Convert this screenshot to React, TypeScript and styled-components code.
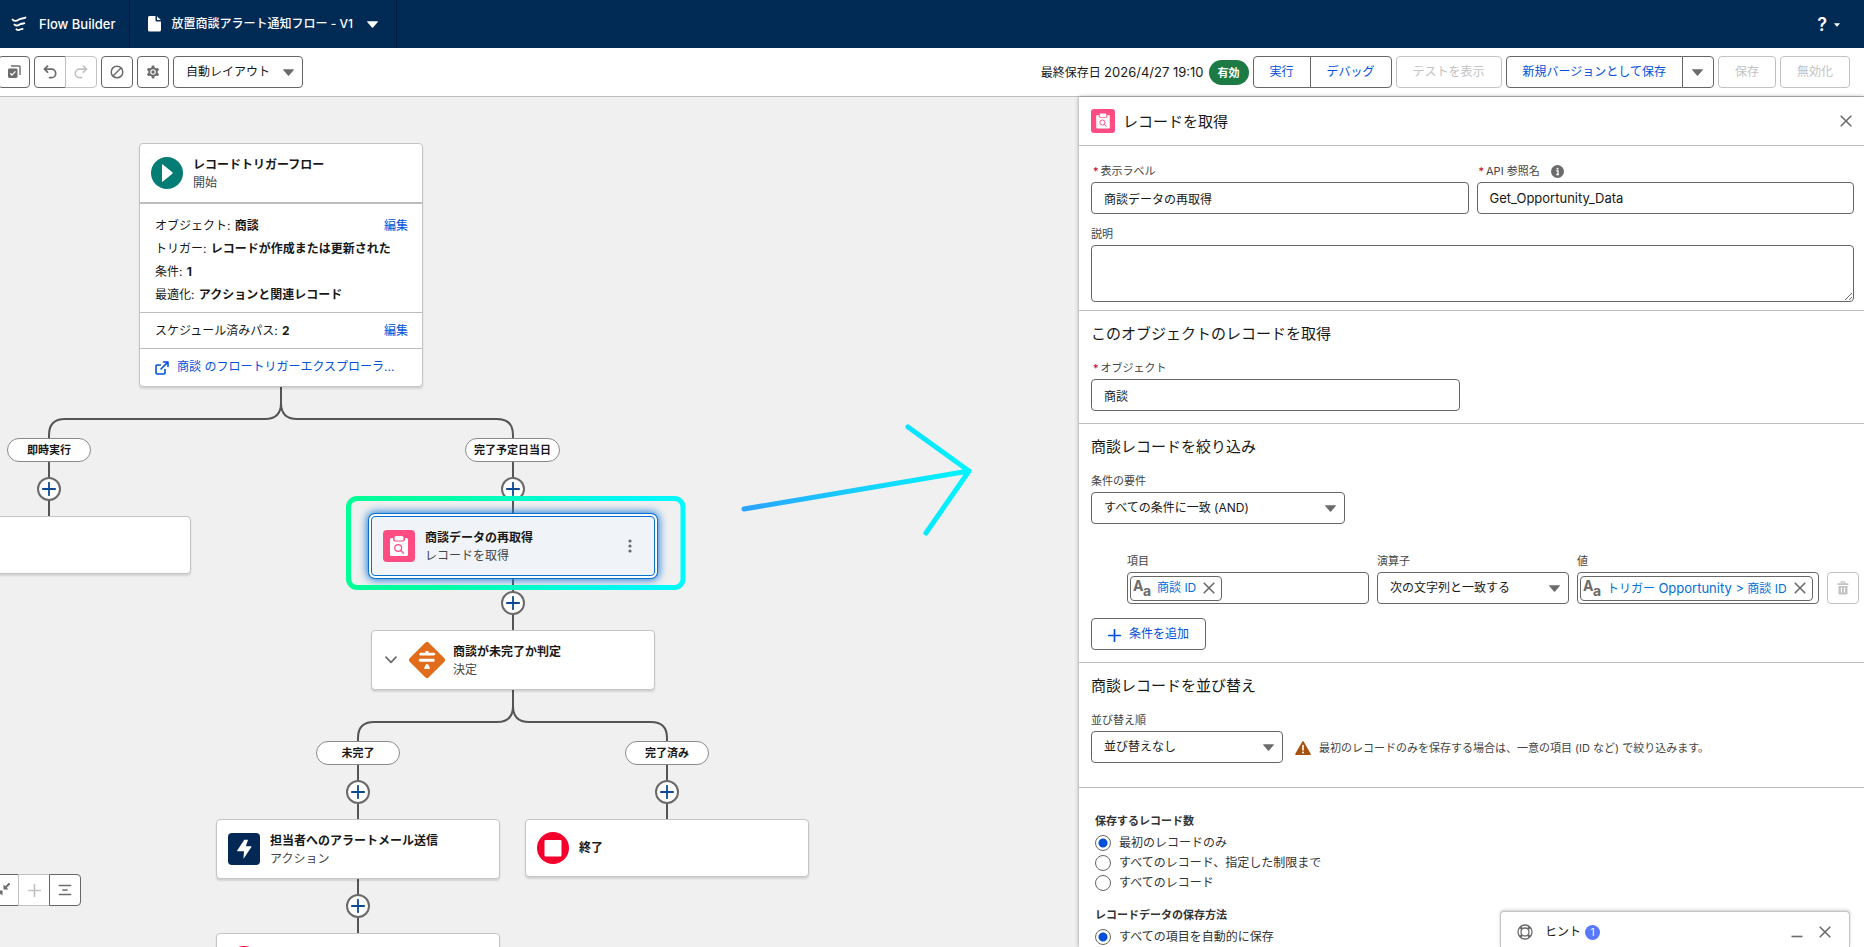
import React from "react";
import styled, { createGlobalStyle, css } from "styled-components";

const sans = `Inter, "Noto Sans CJK JP", sans-serif`;
const c = {
  navy: "#012a55",
  ink: "#181818",
  soft: "#444444",
  icon: "#6b6b6b",
  line: "#666666",
  rule: "#bdbdbd",
  faint: "#c2c2c2",
  brand: "#0250d9",
  link: "#0070d8",
  wire: "#555555",
  pink: "#ff4d84",
};

const Global = createGlobalStyle`
  *, *::before, *::after { box-sizing: border-box; }
  body { margin: 0; font-family: ${sans}; font-size: 12px; line-height: 16px; color: ${c.ink}; background: #fff; }
  button, input, select, textarea { font: inherit; color: inherit; margin: 0; }
  button { cursor: pointer; }
  a { color: ${c.brand}; text-decoration: none; }
  h1, h2, p { margin: 0; font: inherit; }
`;

/* ---------- shell ---------- */
const Shell = styled.div`
  display: flex;
  flex-direction: column;
  height: 100vh;
  overflow: hidden;
`;
const NavBar = styled.header`
  display: flex;
  flex: 0 0 48px;
  align-items: stretch;
  background: ${c.navy};
  color: #fff;
  font-weight: 500;
`;
const NavCell = styled.div<{ $pad: string }>`
  display: flex;
  align-items: center;
  padding: ${(p) => p.$pad};
  border-right: 1px solid #001b3a;
  white-space: nowrap;
`;
const NavTitle = styled.h1`
  margin-left: 12px;
  padding-bottom: 1px;
  font-size: 13px;
`;
const FlowName = styled.span`
  margin: 0 14px 0 10px;
`;
const Latin = styled.span`
  font-size: 13px;
`;
const BareButton = styled.button`
  display: inline-flex;
  align-items: center;
  justify-content: center;
  padding: 0;
  border: 0;
  background: none;
  color: inherit;
`;
const HelpButton = styled(BareButton)`
  gap: 7px;
  margin-left: auto;
  padding: 2px 24px 0 0;
  font-size: 18px;
  font-weight: 600;
`;
const Toolbar = styled.div`
  display: flex;
  flex: 0 0 49px;
  align-items: center;
  gap: 4px;
  margin-left: -2px;
  padding-right: 14px;
  border-bottom: 1px solid ${c.rule};
  background: #fff;
`;
const Spacer = styled.div`
  flex: 1;
`;
const Group = styled.div`
  display: flex;
  & > button { border-radius: 0; }
  & > button + button { margin-left: -1px; }
  & > button:first-child { border-radius: 4px 0 0 4px; }
  & > button:last-child { border-radius: 0 4px 4px 0; }
`;
const Button = styled.button`
  height: 32px;
  padding: 0 16px;
  border: 1px solid ${c.line};
  border-radius: 4px;
  background: #fff;
  color: ${c.brand};
  white-space: nowrap;
  &:disabled { border-color: ${c.faint}; color: ${c.faint}; }
`;
const IconButton = styled.button`
  display: inline-flex;
  flex: 0 0 32px;
  align-items: center;
  justify-content: center;
  width: 32px;
  height: 32px;
  padding: 0;
  border: 1px solid ${c.line};
  border-radius: 4px;
  background: #fff;
  color: ${c.icon};
  &:disabled { border-color: ${c.faint}; color: ${c.faint}; }
`;
const Saved = styled.span`
  white-space: nowrap;
  time { font-size: 13px; }
`;
const Status = styled.span`
  margin-left: 1px;
  padding: 5px 9px 4px;
  border-radius: 13px;
  background: #1c7a45;
  color: #fff;
  font-size: 11px;
  font-weight: 700;
`;
const Body = styled.div`
  display: flex;
  flex: 1;
  min-height: 0;
`;

/* ---------- canvas ---------- */
const Canvas = styled.main`
  position: relative;
  flex: 1;
  min-width: 0;
  overflow: hidden;
  background: #f0f0f0;
`;
const Wires = styled.svg`
  position: absolute;
  top: 0;
  left: 0;
  width: 1000px;
  height: 850px;
  pointer-events: none;
`;
type Spot = { $x: number; $y: number };
const spot = css<Spot>`
  position: absolute;
  left: ${(p) => p.$x}px;
  top: ${(p) => p.$y}px;
`;
const Card = styled.section<Spot & { $selected?: boolean }>`
  ${spot}
  width: 284px;
  border: 1px solid #c4c4c4;
  border-radius: 4px;
  background: #fff;
  box-shadow: 0 2px 2px rgba(0, 0, 0, 0.12);
  ${(p) =>
    p.$selected &&
    css`
      border-color: #0b6fd0;
      background: #f0f4f8;
      box-shadow: 0 0 0 2px #fff, 0 0 0 3px #0b6fd0, 0 0 8px 4px #1b7ad8;
    `}
`;
const CardHead = styled.div<{ $h: number; $gap?: number }>`
  display: flex;
  align-items: center;
  gap: ${(p) => p.$gap ?? 10}px;
  height: ${(p) => p.$h}px;
  padding: 0 11px;
`;
const CardText = styled.div`
  flex: 1;
  padding-top: 2px;
  line-height: 18px;
`;
const CardTitle = styled.h2`
  font-weight: 700;
`;
const CardKind = styled.p`
  color: ${c.soft};
`;
const KebabButton = styled(BareButton)`
  width: 24px;
  height: 24px;
  margin-right: 1px;
  color: ${c.icon};
`;
const CollapseButton = styled(BareButton)`
  justify-content: flex-start;
  width: 16px;
  height: 16px;
  margin-left: 2px;
`;
const CardPart = styled.div<{ $pad: string }>`
  display: flex;
  justify-content: space-between;
  padding: ${(p) => p.$pad};
  border-top: 1px solid ${c.rule};
  line-height: 23px;
`;
const StartDetails = styled(CardPart)`
  border-top-width: 2px;
`;
const Fact = styled.p`
  white-space: nowrap;
  b { margin-left: 1px; font-weight: 700; }
`;
const FactList = styled.div`
  flex: 1;
  width: 0;
`;
const ExplorerLink = styled.a`
  display: flex;
  align-items: center;
  gap: 8px;
  svg { margin-top: 3px; }
`;
const PathPill = styled.span<Spot & { $w: number }>`
  ${spot}
  width: ${(p) => p.$w}px;
  height: 24px;
  border: 1px solid #8a8a8a;
  border-radius: 12px;
  background: #fff;
  font-size: 11px;
  font-weight: 700;
  line-height: 23px;
  text-align: center;
  white-space: nowrap;
`;
const AddNode = styled.button<Spot>`
  ${spot}
  display: flex;
  align-items: center;
  justify-content: center;
  width: 24px;
  height: 24px;
  padding: 0;
  border: 2px solid #6a6a6a;
  border-radius: 50%;
  background: #fff;
  color: #0b4a8f;
`;
const ZoomBar = styled(Group)`
  position: absolute;
  left: -13px;
  bottom: 41px;
`;

/* ---------- panel ---------- */
const Panel = styled.aside`
  position: relative;
  z-index: 1;
  flex: 0 0 785px;
  overflow: hidden;
  background: #fff;
  box-shadow: 0 0 4px rgba(0, 0, 0, 0.4);
`;
const PanelHead = styled.div`
  display: flex;
  align-items: center;
  gap: 8px;
  height: 49px;
  padding: 0 10px 0 12px;
  border-bottom: 1px solid ${c.rule};
  h2 { padding-top: 2px; font-size: 15px; }
  button { margin-left: auto; width: 16px; height: 24px; color: ${c.icon}; }
`;
const Section = styled.section<{ $pad: string }>`
  padding: ${(p) => p.$pad};
  border-bottom: 1px solid ${c.rule};
`;
const LastSection = styled(Section)`
  border-bottom: 0;
`;
const Heading = styled.h2`
  margin-bottom: 16px;
  font-size: 15px;
  line-height: 20px;
`;
const TwoCols = styled.div`
  display: grid;
  grid-template-columns: 1fr 1fr;
  gap: 8px;
  margin-bottom: 12px;
`;
const Field = styled.div<{ $w?: number }>`
  display: flex;
  flex-direction: column;
  width: ${(p) => (p.$w ? `${p.$w}px` : "auto")};
`;
const LabelLine = styled.div`
  display: flex;
  align-items: center;
  margin-bottom: 3px;
  font-size: 11px;
  color: ${c.soft};
  svg { margin-left: 11px; }
`;
const Star = styled.abbr`
  margin: 0 2px;
  color: #c00019;
  text-decoration: none;
`;
const box = css`
  width: 100%;
  height: 32px;
  border: 1px solid ${c.line};
  border-radius: 4px;
  background: #fff;
`;
const Input = styled.input<{ $latin?: boolean }>`
  ${box}
  padding: 0 12px;
  font-size: ${(p) => (p.$latin ? 13 : 12)}px;
`;
const TextArea = styled.textarea`
  ${box}
  display: block;
  height: 57px;
  padding: 8px 12px;
  resize: vertical;
`;
const SelectWrap = styled.div`
  position: relative;
  svg { position: absolute; right: 9px; top: 13px; pointer-events: none; color: ${c.icon}; }
`;
const SelectBox = styled.select`
  ${box}
  padding: 0 24px 0 12px;
  appearance: none;
`;
const LayoutSelect = styled.div`
  width: 130px;
`;
const Criteria = styled.div`
  display: grid;
  grid-template-columns: 242px 192px 242px 32px;
  gap: 8px;
  align-items: end;
  margin: 29px 0 14px 36px;
`;
const TokenBox = styled.div`
  ${box}
  display: flex;
  align-items: center;
  padding: 0 2px;
  input { flex: 1; width: 0; min-width: 0; padding: 0; border: 0; outline: 0; background: none; }
`;
const Token = styled.span`
  display: flex;
  align-items: center;
  gap: 5px;
  height: 25px;
  padding: 0 6px 0 2px;
  border: 1px solid ${c.line};
  border-radius: 4px;
  color: ${c.link};
  white-space: nowrap;
  button { margin-left: 2px; color: ${c.icon}; }
`;
const AddCondition = styled(Button)`
  display: flex;
  align-items: center;
  gap: 8px;
  svg { margin-top: 3px; }
`;
const SortRow = styled.div`
  display: flex;
  align-items: flex-end;
  gap: 12px;
`;
const Warning = styled.p`
  display: flex;
  align-items: center;
  gap: 8px;
  height: 32px;
  padding-top: 2px;
  font-size: 11px;
  color: ${c.soft};
`;
const RadioSet = styled.fieldset`
  margin: 0 0 14px;
  padding: 0 4px;
  border: 0;
`;
const Legend = styled.legend`
  margin-bottom: 4px;
  padding: 0;
  font-size: 11px;
  font-weight: 700;
  color: #333;
`;
const RadioLabel = styled.label`
  display: flex;
  align-items: center;
  gap: 8px;
  height: 20px;
  color: #333;
`;
const Radio = styled.input`
  appearance: none;
  width: 16px;
  height: 16px;
  border: 1px solid ${c.line};
  border-radius: 50%;
  background: #fff;
  &:checked { background: radial-gradient(circle, ${c.brand} 0 4px, #fff 5px); }
`;
const HintDock = styled.div`
  position: absolute;
  right: 14px;
  bottom: 0;
  display: flex;
  align-items: center;
  width: 350px;
  height: 36px;
  padding: 5px 16px 0;
  border: 1px solid #c4c4c4;
  border-bottom: 0;
  border-radius: 4px 4px 0 0;
  background: #fff;
  box-shadow: 0 -1px 3px rgba(0, 0, 0, 0.2);
  color: ${c.ink};
  & > svg { margin-right: 12px; }
  button { width: 16px; height: 16px; color: ${c.icon}; }
  button + button { margin-left: 12px; }
`;
const HintCount = styled.span`
  width: 15px;
  height: 15px;
  margin-left: 4px;
  border-radius: 50%;
  background: #5a78fa;
  color: #fff;
  font-size: 10px;
  line-height: 15px;
  text-align: center;
`;

/* ---------- icons ---------- */
const Caret = ({ w = 10, h = 6 }: { w?: number; h?: number }) => (
  <svg width={w} height={h} viewBox="0 0 10 6" aria-hidden="true">
    <path d="M0.4 0h9.2q.6.2.2.7L5.5 5.7q-.5.5-1 0L.2.7Q-.2.2.4 0z" fill="currentColor" />
  </svg>
);
const Cross = ({ size = 12 }: { size?: number }) => (
  <svg width={size} height={size} viewBox="0 0 12 12" aria-hidden="true">
    <path d="M1.2 1.2l9.6 9.6M10.8 1.2L1.2 10.8" stroke="currentColor" strokeWidth="1.6" strokeLinecap="round" />
  </svg>
);
const Plus = ({ size = 14 }: { size?: number }) => (
  <svg width={size} height={size} viewBox="0 0 14 14" aria-hidden="true">
    <path d="M7 .8v12.4M.8 7h12.4" stroke="currentColor" strokeWidth="1.8" strokeLinecap="round" />
  </svg>
);
const FlowLogo = () => (
  <svg width="16" height="16" viewBox="0 0 16 16" fill="none" stroke="#fff" strokeWidth="1.9" strokeLinecap="round" aria-hidden="true">
    <path d="M1.600 3.600C3.500 5.800 5.800 4.900 8 3.500S12 2.900 14.400 1.600" />
    <path d="M3.500 8.600C5.300 10.400 7 9.600 8.700 8.500S11.500 8.200 13.300 7.200" />
    <path d="M5.500 13.300C7 14.800 8 14.200 9.200 13.500S10.600 13.300 11.600 12.900" />
  </svg>
);
const FileIcon = () => (
  <svg width="13" height="16" viewBox="0 0 13 16" aria-hidden="true">
    <path d="M1.500 0H7.500V4.300Q7.500 5.500 8.700 5.500H13V14Q13 15.500 11.500 15.500H1.500Q0 15.500 0 14V1.500Q0 0 1.500 0z" fill="#fff" />
    <path d="M9 .2L12.800 4H9.500Q9 4 9 3.500z" fill="#fff" />
  </svg>
);
const SelectIcon = () => (
  <svg width="14" height="14" viewBox="0 0 14 14" aria-hidden="true">
    <path d="M4 1h8.200Q13 1 13 1.800V10" fill="none" stroke="currentColor" strokeWidth="1.400" />
    <rect x="1" y="3.500" width="9.500" height="9.500" rx="1.400" fill="currentColor" />
    <path d="M3.300 8.300l1.700 1.800 3.400-3.700" fill="none" stroke="#fff" strokeWidth="1.300" />
  </svg>
);
const UndoIcon = ({ flip }: { flip?: boolean }) => (
  <svg width="14" height="14" viewBox="0 0 14 14" aria-hidden="true">
    <g transform={flip ? "translate(14 0) scale(-1 1)" : undefined} fill="none" stroke="currentColor" strokeWidth="1.700" strokeLinecap="round" strokeLinejoin="round">
      <path d="M4.500 1.200L1.500 4.200L4.500 7.200" />
      <path d="M1.800 4.200H8.500A4.200 4.200 0 0 1 8.500 12.600H6.500" />
    </g>
  </svg>
);
const BanIcon = () => (
  <svg width="14" height="14" viewBox="0 0 14 14" fill="none" stroke="currentColor" strokeWidth="1.500" aria-hidden="true">
    <circle cx="7" cy="7" r="5.800" />
    <path d="M3 11L11 3" />
  </svg>
);
const GearIcon = () => (
  <svg width="14" height="14" viewBox="0 0 14 14" aria-hidden="true">
    <g fill="currentColor">
      {[0, 60, 120].map((a) => (
        <rect key={a} x="5.600" y="0.600" width="2.800" height="12.800" rx="1" transform={`rotate(${a} 7 7)`} />
      ))}
      <circle cx="7" cy="7" r="4.700" />
    </g>
    <circle cx="7" cy="7" r="2.800" fill="#fff" />
    <circle cx="7" cy="7" r="1.700" fill="currentColor" />
  </svg>
);
const GetRecordsIcon = ({ size = 32 }: { size?: number }) => (
  <svg width={size} height={size} viewBox="0 0 32 32" aria-hidden="true">
    <rect width="32" height="32" rx="4" fill={c.pink} />
    <rect x="7" y="8" width="18" height="18" rx="1.500" fill="#fff" />
    <rect x="10" y="4.500" width="12" height="7" rx="2.500" fill={c.pink} />
    <rect x="11.500" y="6" width="9" height="4.500" rx="1.600" fill="#fff" />
    <circle cx="15.200" cy="18" r="3.400" fill="none" stroke={c.pink} strokeWidth="1.300" />
    <path d="M17.700 20.500L20.500 23.200" stroke={c.pink} strokeWidth="1.300" strokeLinecap="round" />
  </svg>
);
const StartIcon = () => (
  <svg width="32" height="32" viewBox="0 0 32 32" aria-hidden="true">
    <circle cx="16" cy="16" r="16" fill="#057c74" />
    <path d="M11 7.800Q11 6.800 11.800 7.500L21.300 15.200Q22.100 16 21.300 16.800L11.800 24.500Q11 25.200 11 24.200z" fill="#fff" />
  </svg>
);
const ActionIcon = () => (
  <svg width="32" height="32" viewBox="0 0 32 32" aria-hidden="true">
    <rect width="32" height="32" rx="4" fill="#032855" />
    <path d="M16.300 6.700h3.200q.6 0 .4.500L17.800 13.300h5.200q.8 0 .4.600L15.900 25.300q-.5.600-.4-.2L16 18.300H9.600q-.8 0-.4-.7z" fill="#fff" />
  </svg>
);
const EndIcon = () => (
  <svg width="32" height="32" viewBox="0 0 32 32" aria-hidden="true">
    <circle cx="16" cy="16" r="16" fill="#f5002d" />
    <rect x="7.500" y="8" width="17" height="16.500" rx="1" fill="#fff" />
  </svg>
);
const DecisionIcon = () => (
  <svg width="36" height="38" viewBox="1 0 36 38" aria-hidden="true">
    <rect x="5.500" y="5.500" width="27" height="27" rx="2.500" fill="#e06c1c" transform="rotate(45 19 19)" />
    <g fill="#fff">
      <path d="M17.500 10h3v1.800h5.200q.9 0 1.400.7t0 1.300-1.400.700H12.300q-1 0-1-1.300t1-1.400h5.200z" />
      <path d="M12.500 17.700H25.700q1 0 1 1.500t-1 1.600H12.500q-1 0-1.600-.8-.5-.8 0-1.500t1.600-.8z" />
      <path d="M18 23.300h2.200l1.600 3.700q.300 1-.5 1h-4.500q-.8 0-.5-1z" />
    </g>
  </svg>
);
const ChevronDown = () => (
  <svg width="12" height="8" viewBox="0 0 12 8" aria-hidden="true">
    <path d="M1 1.200L6 6.400L11 1.200" fill="none" stroke={c.icon} strokeWidth="1.700" strokeLinecap="round" strokeLinejoin="round" />
  </svg>
);
const Kebab = () => (
  <svg width="4" height="14" viewBox="0 0 4 14" fill="currentColor" aria-hidden="true">
    <circle cx="2" cy="2" r="1.600" />
    <circle cx="2" cy="7" r="1.600" />
    <circle cx="2" cy="12" r="1.600" />
  </svg>
);
const OpenIcon = () => (
  <svg width="14" height="14" viewBox="0 0 14 14" fill="none" stroke={c.brand} strokeWidth="1.600" strokeLinecap="round" strokeLinejoin="round" aria-hidden="true">
    <path d="M5.500 4H2Q1 4 1 5V12Q1 13 2 13H9Q10 13 10 12V8.500" />
    <path d="M8.500 1H13V5.500M12.600 1.400L6 8" />
  </svg>
);
const InfoIcon = () => (
  <svg width="13" height="13" viewBox="0 0 13 13" aria-hidden="true">
    <circle cx="6.500" cy="6.500" r="6.500" fill={c.icon} />
    <circle cx="6.500" cy="3.700" r="1" fill="#fff" />
    <path d="M5.200 5.800H7V9.200M5.200 9.500H8" stroke="#fff" strokeWidth="1.300" fill="none" />
  </svg>
);
const TextTypeIcon = () => (
  <svg width="19" height="23" viewBox="0 0 19 23" fill={c.icon} fontFamily={sans} fontWeight="700" role="img" aria-label="テキスト">
    <text x="0" y="14" fontSize="14">A</text>
    <text x="10" y="19" fontSize="14">a</text>
  </svg>
);
const TrashIcon = () => (
  <svg width="12" height="14" viewBox="0 0 12 14" aria-hidden="true">
    <path d="M4.200 2.200V1.500Q4.200.8 5 .8h2q.8 0 .8.700v.7" fill="none" stroke="currentColor" strokeWidth="1.300" />
    <rect x="0.500" y="2.200" width="11" height="1.700" rx=".6" fill="currentColor" />
    <path d="M1.500 5h9v7.200q0 1.300-1.300 1.300H2.800q-1.300 0-1.300-1.300z" fill="currentColor" />
    <path d="M4.500 6.500v5M7.500 6.500v5" stroke="#fff" strokeWidth="1.100" />
  </svg>
);
const WarningIcon = () => (
  <svg width="16" height="14" viewBox="0 0 16 14" aria-hidden="true">
    <path d="M7.200.7q.8-1.200 1.600 0l6.900 12q.6 1.200-.7 1.300H1q-1.300-.1-.7-1.300z" fill="#a5530f" />
    <path d="M8 4.500V9" stroke="#fff" strokeWidth="1.600" strokeLinecap="round" />
    <circle cx="8" cy="11.500" r="1" fill="#fff" />
  </svg>
);
const LifeBuoy = () => (
  <svg width="16" height="16" viewBox="0 0 16 16" fill="none" stroke={c.icon} aria-hidden="true">
    <circle cx="8" cy="8" r="7" strokeWidth="1.300" />
    <circle cx="8" cy="8" r="4" strokeWidth="1.300" />
    <path d="M3.200 3.200l2 2M12.800 3.200l-2 2M3.200 12.800l2-2M12.800 12.800l-2-2" strokeWidth="2.600" />
  </svg>
);
const FitIcon = () => (
  <svg width="14" height="14" viewBox="0 0 14 14" stroke="currentColor" fill="currentColor" aria-hidden="true">
    <path d="M13 1L9.500 4.500M1 13l3.500-3.500" strokeWidth="2" strokeLinecap="round" />
    <path d="M7.500 1.500V6.500h5zM6.500 12.500V7.500H1.500z" stroke="none" />
  </svg>
);
const OutlineIcon = () => (
  <svg width="14" height="12" viewBox="0 0 14 12" stroke="currentColor" strokeWidth="1.700" strokeLinecap="round" aria-hidden="true">
    <path d="M1.500 1.500h11M5 6h4M1.500 10.500h11" />
  </svg>
);

/* ---------- parts ---------- */
const Select = ({ id, value, label }: { id?: string; value: string; label?: string }) => (
  <SelectWrap>
    <SelectBox id={id} aria-label={label} defaultValue={value}>
      <option>{value}</option>
    </SelectBox>
    <Caret w={11} h={7} />
  </SelectWrap>
);

const Label = ({ htmlFor, text, required, info }: { htmlFor: string; text: string; required?: boolean; info?: boolean }) => (
  <LabelLine>
    {required && <Star title="必須">*</Star>}
    <label htmlFor={htmlFor}>{text}</label>
    {info && <InfoIcon />}
  </LabelLine>
);

const TokenField = ({ id, label, children }: { id: string; label: string; children: React.ReactNode }) => (
  <Field>
    <Label htmlFor={id} text={label} />
    <TokenBox>
      <Token>
        <TextTypeIcon />
        <span>{children}</span>
        <BareButton aria-label="選択を解除">
          <Cross />
        </BareButton>
      </Token>
      <input id={id} />
    </TokenBox>
  </Field>
);

const Radios = ({ name, legend, options }: { name: string; legend: string; options: string[] }) => (
  <RadioSet>
    <Legend>{legend}</Legend>
    {options.map((o, i) => (
      <RadioLabel key={o}>
        <Radio type="radio" name={name} defaultChecked={i === 0} />
        {o}
      </RadioLabel>
    ))}
  </RadioSet>
);

const addPoints = [
  [49, 392],
  [513, 392],
  [513, 506],
  [358, 695],
  [667, 695],
  [358, 809],
];

const FlowCanvas = () => (
  <Canvas>
    <Wires fill="none" stroke={c.wire} strokeWidth="2" aria-hidden="true">
      <path d="M281 288V306Q281 322 265 322H65Q49 322 49 338V420" />
      <path d="M281 306Q281 322 297 322H497Q513 322 513 338V534" />
      <path d="M513 592V609Q513 625 497 625H374Q358 625 358 641V837" />
      <path d="M513 609Q513 625 529 625H651Q667 625 667 641V723" />
    </Wires>

    <Card $x={139} $y={46}>
      <CardHead $h={58}>
        <StartIcon />
        <CardText>
          <CardTitle>レコードトリガーフロー</CardTitle>
          <CardKind>開始</CardKind>
        </CardText>
      </CardHead>
      <StartDetails $pad="10px 14px 6px 15px">
        <FactList>
          <Fact>オブジェクト: <b>商談</b></Fact>
          <Fact>トリガー: <b>レコードが作成または更新された</b></Fact>
          <Fact>条件: <b>1</b></Fact>
          <Fact>最適化: <b>アクションと関連レコード</b></Fact>
        </FactList>
        <a href="#start">編集</a>
      </StartDetails>
      <CardPart $pad="6px 14px 6px 15px">
        <Fact>スケジュール済みパス: <b>2</b></Fact>
        <a href="#paths">編集</a>
      </CardPart>
      <CardPart $pad="6px 14px 8px 15px">
        <ExplorerLink href="#explorer">
          <OpenIcon />
          商談 のフロートリガーエクスプローラ...
        </ExplorerLink>
      </CardPart>
    </Card>

    <PathPill $x={7} $y={341} $w={84}>即時実行</PathPill>
    <PathPill $x={465} $y={341} $w={95}>完了予定日当日</PathPill>
    <PathPill $x={316} $y={644} $w={84}>未完了</PathPill>
    <PathPill $x={625} $y={644} $w={84}>完了済み</PathPill>

    {addPoints.map(([x, y]) => (
      <AddNode key={`${x}-${y}`} $x={x - 12} $y={y - 12} aria-label="要素を追加">
        <Plus />
      </AddNode>
    ))}

    <Card $x={-93} $y={419}>
      <CardHead $h={56} />
    </Card>

    <Card $x={371} $y={419} $selected>
      <CardHead $h={58}>
        <GetRecordsIcon />
        <CardText>
          <CardTitle>商談データの再取得</CardTitle>
          <CardKind>レコードを取得</CardKind>
        </CardText>
        <KebabButton aria-label="メニュー">
          <Kebab />
        </KebabButton>
      </CardHead>
    </Card>

    <Card $x={371} $y={533}>
      <CardHead $h={58} $gap={8}>
        <CollapseButton aria-label="折りたたむ">
          <ChevronDown />
        </CollapseButton>
        <DecisionIcon />
        <CardText>
          <CardTitle>商談が未完了か判定</CardTitle>
          <CardKind>決定</CardKind>
        </CardText>
      </CardHead>
    </Card>

    <Card $x={216} $y={722}>
      <CardHead $h={58}>
        <ActionIcon />
        <CardText>
          <CardTitle>担当者へのアラートメール送信</CardTitle>
          <CardKind>アクション</CardKind>
        </CardText>
      </CardHead>
    </Card>

    <Card $x={525} $y={722}>
      <CardHead $h={56}>
        <EndIcon />
        <CardTitle>終了</CardTitle>
      </CardHead>
    </Card>

    <Card $x={216} $y={836}>
      <CardHead $h={56}>
        <EndIcon />
      </CardHead>
    </Card>

    <Wires fill="none" aria-hidden="true">
      <defs>
        <linearGradient id="frame" gradientUnits="userSpaceOnUse" x1="346" y1="0" x2="686" y2="0">
          <stop offset="0" stopColor="#00ff94" />
          <stop offset="0.3" stopColor="#00ffa8" />
          <stop offset="0.8" stopColor="#00f6f0" />
          <stop offset="1" stopColor="#00faff" />
        </linearGradient>
        <linearGradient id="arrow" gradientUnits="userSpaceOnUse" x1="744" y1="0" x2="970" y2="0">
          <stop offset="0" stopColor="#2ba2ff" />
          <stop offset="0.65" stopColor="#0fdcff" />
          <stop offset="1" stopColor="#00f6ff" />
        </linearGradient>
      </defs>
      <rect x="348.5" y="401.500" width="334.500" height="89" rx="8.500" stroke="url(#frame)" strokeWidth="5" />
      <path d="M744 412L969 374M908 330L969 374L926 436" stroke="url(#arrow)" strokeWidth="5" strokeLinecap="round" strokeLinejoin="round" />
    </Wires>

    <ZoomBar>
      <IconButton aria-label="全体を表示"><FitIcon /></IconButton>
      <IconButton aria-label="拡大" disabled><Plus size={13} /></IconButton>
      <IconButton aria-label="概要"><OutlineIcon /></IconButton>
    </ZoomBar>
  </Canvas>
);

export default function App() {
  return (
    <Shell>
      <Global />
      <NavBar>
        <NavCell $pad="0 14px 0 11px">
          <FlowLogo />
          <NavTitle>Flow Builder</NavTitle>
        </NavCell>
        <NavCell $pad="0 18px">
          <FileIcon />
          <FlowName>放置商談アラート通知フロー - V1</FlowName>
          <BareButton aria-label="バージョン"><Caret w={11} h={7} /></BareButton>
        </NavCell>
        <HelpButton aria-label="ヘルプ">
          ?<Caret w={6} h={4} />
        </HelpButton>
      </NavBar>

      <Toolbar>
        <IconButton aria-label="要素を選択"><SelectIcon /></IconButton>
        <Group>
          <IconButton aria-label="元に戻す"><UndoIcon /></IconButton>
          <IconButton aria-label="やり直す" disabled><UndoIcon flip /></IconButton>
        </Group>
        <IconButton aria-label="エラー"><BanIcon /></IconButton>
        <IconButton aria-label="設定"><GearIcon /></IconButton>
        <LayoutSelect>
          <Select label="レイアウト" value="自動レイアウト" />
        </LayoutSelect>
        <Spacer />
        <Saved>最終保存日 <time dateTime="2026-04-27T19:10">2026/4/27 19:10</time></Saved>
        <Status>有効</Status>
        <Group>
          <Button>実行</Button>
          <Button>デバッグ</Button>
        </Group>
        <Button disabled>テストを表示</Button>
        <Group>
          <Button>新規バージョンとして保存</Button>
          <IconButton aria-label="その他の保存"><Caret w={11} h={7} /></IconButton>
        </Group>
        <Button disabled>保存</Button>
        <Button disabled>無効化</Button>
      </Toolbar>

      <Body>
        <FlowCanvas />
        <Panel>
          <PanelHead>
            <GetRecordsIcon size={24} />
            <h2>レコードを取得</h2>
            <BareButton aria-label="閉じる"><Cross /></BareButton>
          </PanelHead>

          <Section $pad="17px 10px 8px 12px">
            <TwoCols>
              <Field>
                <Label htmlFor="label" text="表示ラベル" required />
                <Input id="label" defaultValue="商談データの再取得" />
              </Field>
              <Field>
                <Label htmlFor="api" text="API 参照名" required info />
                <Input id="api" $latin defaultValue="Get_Opportunity_Data" />
              </Field>
            </TwoCols>
            <Field>
              <Label htmlFor="desc" text="説明" />
              <TextArea id="desc" />
            </Field>
          </Section>

          <Section $pad="13px 12px 12px">
            <Heading>このオブジェクトのレコードを取得</Heading>
            <Field $w={369}>
              <Label htmlFor="object" text="オブジェクト" required />
              <Input id="object" defaultValue="商談" />
            </Field>
          </Section>

          <Section $pad="13px 5px 12px 12px">
            <Heading>商談レコードを絞り込み</Heading>
            <Field $w={254}>
              <Label htmlFor="logic" text="条件の要件" />
              <Select id="logic" value="すべての条件に一致 (AND)" />
            </Field>
            <Criteria>
              <TokenField id="field" label="項目">商談 ID</TokenField>
              <Field>
                <Label htmlFor="operator" text="演算子" />
                <Select id="operator" value="次の文字列と一致する" />
              </Field>
              <TokenField id="value" label="値">
                トリガー <Latin>Opportunity &gt;</Latin> 商談 ID
              </TokenField>
              <IconButton aria-label="条件を削除" disabled><TrashIcon /></IconButton>
            </Criteria>
            <AddCondition>
              <Plus size={13} />
              条件を追加
            </AddCondition>
          </Section>

          <Section $pad="13px 12px 24px">
            <Heading>商談レコードを並び替え</Heading>
            <SortRow>
              <Field $w={192}>
                <Label htmlFor="sort" text="並び替え順" />
                <Select id="sort" value="並び替えなし" />
              </Field>
              <Warning>
                <WarningIcon />
                最初のレコードのみを保存する場合は、一意の項目 (ID など) で絞り込みます。
              </Warning>
            </SortRow>
          </Section>

          <LastSection $pad="25px 12px 0">
            <Radios name="count" legend="保存するレコード数" options={["最初のレコードのみ", "すべてのレコード、指定した制限まで", "すべてのレコード"]} />
            <Radios name="store" legend="レコードデータの保存方法" options={["すべての項目を自動的に保存"]} />
          </LastSection>

          <HintDock>
            <LifeBuoy />
            ヒント
            <HintCount>1</HintCount>
            <Spacer />
            <BareButton aria-label="最小化">
              <svg width="12" height="12" viewBox="0 0 12 12" aria-hidden="true">
                <path d="M0.500 10.500h11" stroke="currentColor" strokeWidth="1.600" />
              </svg>
            </BareButton>
            <BareButton aria-label="ヒントを閉じる"><Cross /></BareButton>
          </HintDock>
        </Panel>
      </Body>
    </Shell>
  );
}
